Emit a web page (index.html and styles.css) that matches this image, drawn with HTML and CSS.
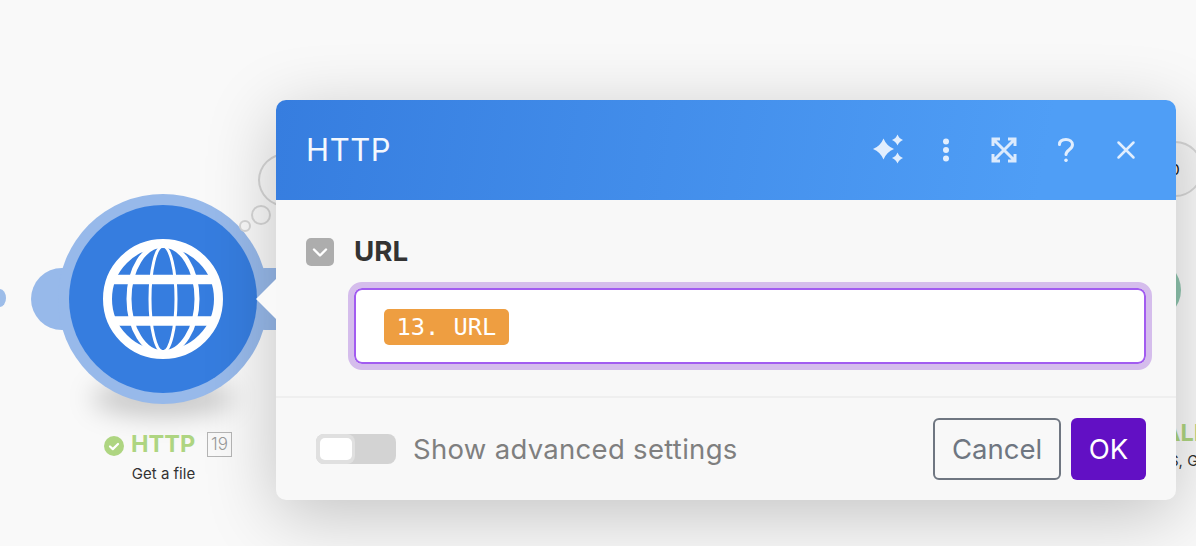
FILE: index.html
```html
<!DOCTYPE html>
<html lang="en">
<head>
<meta charset="utf-8">
<title>HTTP</title>
<link rel="stylesheet" href="styles.css">
</head>
<body>
<main class="canvas">
  <span class="link-dot"></span>
  <span class="node-shadow"></span>
  <div class="node">
    <span class="bump bump-left"></span>
    <span class="bump bump-right"></span>
    <span class="halo"></span>
    <div class="disc">
      <svg class="globe" viewBox="0 0 120 120" width="120" height="120" fill="none" stroke="#fff">
        <defs><clipPath id="globe-clip"><circle cx="60" cy="60" r="58"/></clipPath></defs>
        <g clip-path="url(#globe-clip)">
          <ellipse cx="60" cy="60" rx="13" ry="53" stroke-width="3"/>
          <ellipse cx="60" cy="60" rx="34" ry="54" stroke-width="5"/>
          <path d="M0 40.500H120M0 82H120" stroke-width="9.500"/>
        </g>
        <circle cx="60" cy="60" r="55.500" stroke-width="9"/>
      </svg>
    </div>
  </div>
  <span class="bubble bubble-big"></span>
  <span class="bubble bubble-mid"></span>
  <span class="bubble bubble-small"></span>

  <div class="node-label">
    <div class="node-title">
      <svg class="check" viewBox="0 0 20 20" width="20" height="20"><circle cx="10" cy="10" r="10" fill="#aed581"/><path d="M6 10.500l2.800 2.600L14 8" fill="none" stroke="#fff" stroke-width="2.200" stroke-linecap="round" stroke-linejoin="round"/></svg>
      <span class="title-text">HTTP</span>
      <span class="count">19</span>
    </div>
    <div class="node-sub">Get a file</div>
  </div>

  <span class="peek-bubble"><span class="peek-num">0</span></span>
  <span class="peek-green"></span>
  <span class="peek-title">ALL</span>
  <span class="peek-sub">S, G</span>

  <section class="dialog">
    <header class="dialog-head">
      <h1 class="dialog-title">HTTP</h1>
      <div class="head-icons">
        <svg class="icon" viewBox="0 0 30 30" width="30" height="30" fill="#e1eefe"><path d="M9.500 3.500Q12.500 11 20 14Q12.500 17 9.500 24.500Q6.500 17 -1 14Q6.500 11 9.500 3.500Z"/><path d="M23.500 -.5Q25 3.500 29 5Q25 6.500 23.500 10.500Q22 6.500 18 5Q22 3.500 23.500 -.5Z"/><path d="M23.500 17.500Q25 21.500 29 23Q25 24.500 23.500 28.500Q22 24.500 18 23Q22 21.500 23.500 17.500Z"/></svg>
        <svg class="icon" viewBox="0 0 30 30" width="30" height="30" fill="#e1eefe"><circle cx="15" cy="6.500" r="3"/><circle cx="15" cy="15" r="3"/><circle cx="15" cy="23.500" r="3"/></svg>
        <svg class="icon" viewBox="0 0 30 30" width="30" height="30" fill="none" stroke="#dcebfd" stroke-width="3" stroke-linecap="butt" stroke-linejoin="miter"><path d="M4 11V4H11M19 4h7V11M26 19v7H19M11 26H4V19M5 5l20 20M25 5L5 25"/></svg>
        <svg class="icon icon-help" viewBox="0 0 30 30" width="30" height="30" fill="none" stroke="#e1eefe" stroke-width="3" stroke-linecap="round"><path d="M8.500 9.500C8.500 6 11.500 4.500 15 4.500s6.500 2 6.500 5.200c0 5-6.500 5-6.500 9.800"/><circle cx="15" cy="25.300" r="1.200" fill="#e1eefe" stroke-width="1.200"/></svg>
        <svg class="icon icon-close" viewBox="0 0 30 30" width="30" height="30" fill="none" stroke="#e1eefe" stroke-width="2.500" stroke-linecap="round"><path d="M7.500 7.500l15 15M22.500 7.500l-15 15"/></svg>
      </div>
    </header>
    <div class="dialog-body">
      <div class="field-head">
        <span class="collapse"><svg viewBox="0 0 16 11" width="16" height="11" fill="none" stroke="#fff" stroke-width="2.400" stroke-linecap="round" stroke-linejoin="round"><path d="M2 2.500l6 6 6-6"/></svg></span>
        <span class="field-label">URL</span>
      </div>
      <div class="url-input"><span class="pill">13. URL</span></div>
    </div>
    <footer class="dialog-foot">
      <div class="advanced">
        <span class="switch"><span class="knob"></span></span>
        <span class="advanced-label">Show advanced settings</span>
      </div>
      <div class="actions">
        <button class="btn btn-cancel" type="button">Cancel</button>
        <button class="btn btn-ok" type="button">OK</button>
      </div>
    </footer>
  </section>
  <span class="notch"></span>
</main>
</body>
</html>
```
FILE: styles.css
```css
* { box-sizing: border-box; }
html, body { margin: 0; height: 100%; }
body { background: #f9f9f9; font-family: Inter, "Liberation Sans", sans-serif; overflow: hidden; }
.canvas { position: relative; width: 1196px; height: 546px; overflow: hidden; }

.link-dot { position: absolute; left: -6px; top: 289px; width: 12px; height: 18px; border-radius: 50%; background: #9dbde9; }

.node-shadow { position: absolute; left: 92px; top: 380px; width: 142px; height: 36px; border-radius: 50%; background: rgba(0,0,0,.2); filter: blur(13px); }
.node { position: absolute; left: 58px; top: 194px; width: 210px; height: 210px; }
.halo { position: absolute; inset: 0; border-radius: 50%; background: #97b9ea; }
.bump { position: absolute; height: 62px; border-radius: 31px; background: #97b9ea; top: 74px; }
.bump-left { left: -27px; width: 62px; }
.bump-right { left: 176px; width: 80px; }
.disc { position: absolute; left: 11px; top: 11px; width: 188px; height: 188px; border-radius: 50%; background: #367ddf; display: flex; align-items: center; justify-content: center; }
.globe { display: block; }
.notch { position: absolute; left: 256px; top: 279px; width: 0; height: 0; border-style: solid; border-width: 20px 20px 20px 0; border-color: transparent #f9f9f9 transparent transparent; }

.bubble { position: absolute; border: 2px solid #d6d6d6; border-radius: 50%; background: #f9f9f9; }
.bubble-big { left: 258px; top: 153px; width: 56px; height: 54px; }
.bubble-mid { left: 251px; top: 205px; width: 20px; height: 20px; }
.bubble-small { left: 239px; top: 220px; width: 12px; height: 12px; }

.node-label { position: absolute; left: 104px; top: 431px; width: 128px; display: flex; flex-direction: column; align-items: center; }
.node-title { display: flex; align-items: center; width: 100%; height: 26px; }
.check { flex: none; margin-top: 3px; }
.title-text { margin-left: 7px; font-size: 23.500px; font-weight: 700; color: #aed581; line-height: 26px; }
.count { margin-left: 12px; width: 25px; height: 25px; border: 1px solid #b5b5b5; color: #999; font-size: 17px; font-weight: 300; line-height: 23px; text-align: center; margin-top: 1px; }
.node-sub { margin-top: 7px; margin-right: 9px; text-align: center; font-size: 15px; line-height: 20px; color: #333; white-space: nowrap; }

.peek-bubble { position: absolute; left: 1147px; top: 141px; width: 56px; height: 56px; border: 2px solid #d6d6d6; border-radius: 50%; background: #f5f5f5; display: flex; align-items: center; justify-content: center; }
.peek-num { font-size: 15px; color: #111; }
.peek-green { position: absolute; left: 1119px; top: 259px; width: 62px; height: 62px; border-radius: 50%; background: #8fc4ae; }
.peek-title { position: absolute; left: 1163px; top: 420px; font-size: 23.500px; font-weight: 700; line-height: 26px; color: #aed581; }
.peek-sub { position: absolute; left: 1169px; top: 451px; font-size: 15px; line-height: 20px; color: #333; white-space: nowrap; }

.dialog { position: absolute; left: 276px; top: 100px; width: 900px; height: 400px; border-radius: 10px; background: #f8f8f8; box-shadow: 0 15px 70px rgba(0,0,0,.22); display: flex; flex-direction: column; overflow: hidden; }
.dialog-head { flex: none; height: 100px; background: linear-gradient(100deg, #367ddf, #4f9ef6 85%); display: flex; align-items: center; justify-content: space-between; padding: 0 35.500px 0 30px; }
.dialog-title { margin: 0 0 2px; font-size: 31px; font-weight: 400; color: #f4f8fe; letter-spacing: .6px; }
.head-icons { display: flex; align-items: center; gap: 27.500px; margin-bottom: 1px; }
.icon { display: block; overflow: visible; }
.icon-help { margin-left: 5px; }
.icon-close { margin-left: 2px; }
.dialog-body { flex: 1; padding: 38px 0 0 30px; }
.field-head { display: flex; align-items: center; gap: 20px; height: 28px; }
.collapse { width: 28px; height: 28px; border-radius: 5px; background: #adadad; display: flex; align-items: center; justify-content: center; }
.field-label { font-size: 27.700px; font-weight: 700; color: #333; margin-bottom: 2px; }
.url-input { margin: 22px 0 0 48px; height: 76px; width: 792px; background: #fff; border: 2px solid #a25cf0; border-radius: 8px; outline: 6px solid #d5bdec; display: flex; align-items: center; padding: 1px 0 0 28px; }
.pill { height: 36px; padding: 0 12.500px; border-radius: 5px; background: #ee9e41; color: #fff; font-family: "DejaVu Sans Mono", monospace; font-size: 23.700px; line-height: 36px; white-space: nowrap; }
.dialog-foot { flex: none; height: 104px; border-top: 2px solid #efefef; display: flex; align-items: flex-start; justify-content: space-between; padding: 20px 30px 0 40px; }
.advanced { display: flex; align-items: center; gap: 17px; height: 62px; }
.switch { width: 80px; height: 30px; border-radius: 8px; background: #d3d3d3; padding: 4px; display: block; position: relative; }
.switch::before { content: ""; position: absolute; left: 0; top: 0; width: 39px; height: 30px; border-radius: 8px; background: #e0e0e0; }
.knob { position: relative; display: block; width: 32px; height: 22px; border-radius: 5px; background: #fff; }
.advanced-label { font-size: 27.500px; color: #7f7f7f; letter-spacing: .3px; }
.actions { display: flex; gap: 10px; }
.btn { height: 62px; border-radius: 6px; font-family: inherit; font-size: 27.500px; padding: 0; }
.btn-cancel { width: 128px; background: #f8f8f8; border: 2px solid #6f7681; color: #6f7681; }
.btn-ok { width: 75px; background: #6210c4; border: 0; color: #fff; }
```
